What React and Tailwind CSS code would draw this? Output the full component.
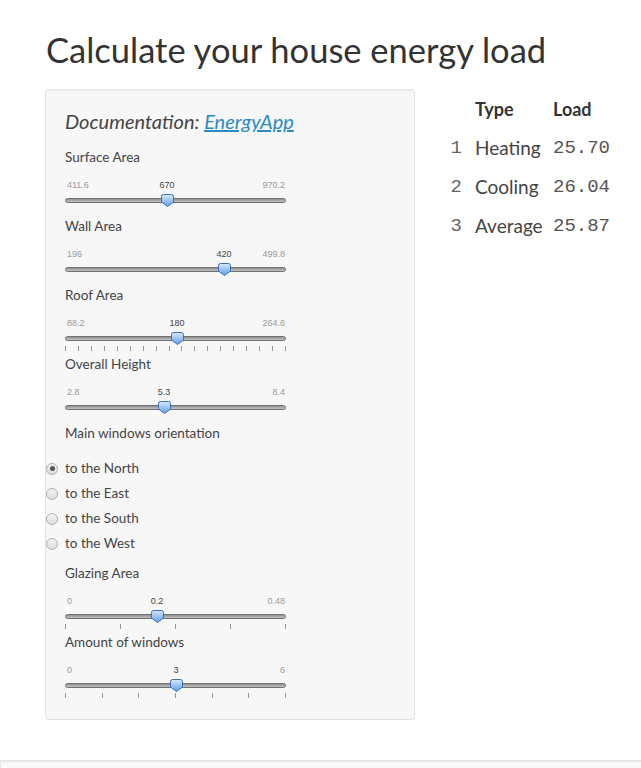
import React from "react";

const sans = { fontFamily: "Lato, 'Open Sans', sans-serif" };

const sliders1 = [
  { label: "Surface Area", min: "411.6", max: "970.2", value: "670", pos: 102, ticks: 0 },
  { label: "Wall Area", min: "196", max: "499.8", value: "420", pos: 159, ticks: 0 },
  { label: "Roof Area", min: "88.2", max: "264.6", value: "180", pos: 112, ticks: 18 },
  { label: "Overall Height", min: "2.8", max: "8.4", value: "5.3", pos: 99, ticks: 0 },
];

const sliders2 = [
  { label: "Glazing Area", min: "0", max: "0.48", value: "0.2", pos: 92, ticks: 5 },
  { label: "Amount of windows", min: "0", max: "6", value: "3", pos: 111, ticks: 7 },
];

function Handle() {
  return (
    <svg width="13" height="13" viewBox="0 0 13 13" className="absolute top-[3px]" style={{ marginLeft: -6 }}>
      <defs>
        <linearGradient id="hg" x1="0" y1="0" x2="0" y2="1">
          <stop offset="0" stopColor="#d6e8fc" />
          <stop offset="1" stopColor="#5f9fe8" />
        </linearGradient>
      </defs>
      <path d="M2.5 0.5 H10.5 Q12.5 0.5 12.5 2.5 V8 L6.5 12.5 L0.5 8 V2.5 Q0.5 0.5 2.5 0.5 Z" fill="url(#hg)" stroke="#3d6fb6" strokeWidth="1" />
    </svg>
  );
}

function Slider({ s }) {
  const ticks = [];
  for (let i = 0; i < s.ticks; i++) ticks.push(i);
  return (
    <div className="h-[69px] flex flex-col">
      <div className="h-5 leading-5 text-[13.5px] text-[#444]">{s.label}</div>
      <div className="relative mt-[12px] h-3 w-[220px] text-[9px] leading-3" style={{ fontFamily: "'Liberation Sans', Arial, sans-serif" }}>
        <span className="absolute left-[2px] text-[#9a9a9a]">{s.min}</span>
        <span className="absolute right-0 text-[#9a9a9a]">{s.max}</span>
        <span className="absolute -translate-x-1/2 text-[#444]" style={{ left: s.pos }}>{s.value}</span>
      </div>
      <div className="relative h-[16px] w-[221px]">
        <div className="absolute left-0 right-0 top-[7px] h-[5px] rounded-full border border-[#707070] bg-gradient-to-b from-[#909090] to-[#c4c4c4]" />
        {s.ticks > 0 && (
          <div className="absolute left-0 right-0 top-[17px] h-[5px]">
            {ticks.map((i) => (
              <div key={i} className="absolute top-0 h-[5px] w-px bg-[#999]" style={{ left: Math.round((i * 220) / (s.ticks - 1)) }} />
            ))}
          </div>
        )}
        <div className="absolute top-0" style={{ left: s.pos }}>
          <Handle />
        </div>
      </div>
    </div>
  );
}

function Radio({ label, checked }) {
  return (
    <div className="h-[25px] flex items-center -ml-[19px]">
      <span className="w-[12px] h-[12px] rounded-full border border-[#b0b0b0] bg-gradient-to-b from-[#f4f4f4] to-[#dcdcdc] flex items-center justify-center">
        {checked && <span className="w-[5px] h-[5px] rounded-full bg-[#555]" />}
      </span>
      <span className="ml-[7px] text-[13.5px] text-[#444]">{label}</span>
    </div>
  );
}

export default function App() {
  const rows = [
    ["1", "Heating", "25.70"],
    ["2", "Cooling", "26.04"],
    ["3", "Average", "25.87"],
  ];
  return (
    <div className="min-h-screen bg-white text-[#333]" style={sans}>
      <div className="pl-[45px] pt-[30px]">
        <h1 className="h-[40px] leading-[40px] text-[34.5px] text-[#333] ml-[1px]">Calculate your house energy load</h1>
        <div className="mt-[19px] flex items-start">
          <div className="w-[370px] h-[631px] border border-[#e3e3e3] rounded bg-[#f7f7f7] shadow-[inset_0_1px_1px_rgba(0,0,0,0.05)] pt-[19px] px-[19px]">
            <div className="h-[28px] leading-[24px] text-[20px] italic text-[#444] mb-[10px]">
              Documentation: <a href="#" className="underline text-[#2a8ac4]">EnergyApp</a>
            </div>
            {sliders1.map((s) => (
              <Slider key={s.label} s={s} />
            ))}
            <div className="h-5 leading-5 text-[13.5px] text-[#444]">Main windows orientation</div>
            <div className="mt-[13px]">
              <Radio label="to the North" checked />
              <Radio label="to the East" />
              <Radio label="to the South" />
              <Radio label="to the West" />
            </div>
            <div className="mt-[7px]">
              {sliders2.map((s) => (
                <Slider key={s.label} s={s} />
              ))}
            </div>
          </div>
          <table className="ml-[30px] mt-[1px] border-collapse">
            <thead>
              <tr className="h-[39px]">
                <th className="w-[17px]" />
                <th className="pl-[13px] w-[91px] text-left font-bold text-[18px]">Type</th>
                <th className="text-left font-bold text-[18px]">Load</th>
              </tr>
            </thead>
            <tbody>
              {rows.map((r) => (
                <tr key={r[0]} className="h-[39px]">
                  <td className="text-right text-[19px] text-[#666]" style={{ fontFamily: "'Liberation Mono', monospace" }}>{r[0]}</td>
                  <td className="pl-[13px] text-[19px] text-[#444]">{r[1]}</td>
                  <td className="text-[19px] text-[#555]" style={{ fontFamily: "'Liberation Mono', monospace" }}>{r[2]}</td>
                </tr>
              ))}
            </tbody>
          </table>
        </div>
      </div>
      <div className="mt-[40px] h-[20px] border-t-2 border-l border-[#e6e6e6] bg-[#f8f8f8]" />
    </div>
  );
}
